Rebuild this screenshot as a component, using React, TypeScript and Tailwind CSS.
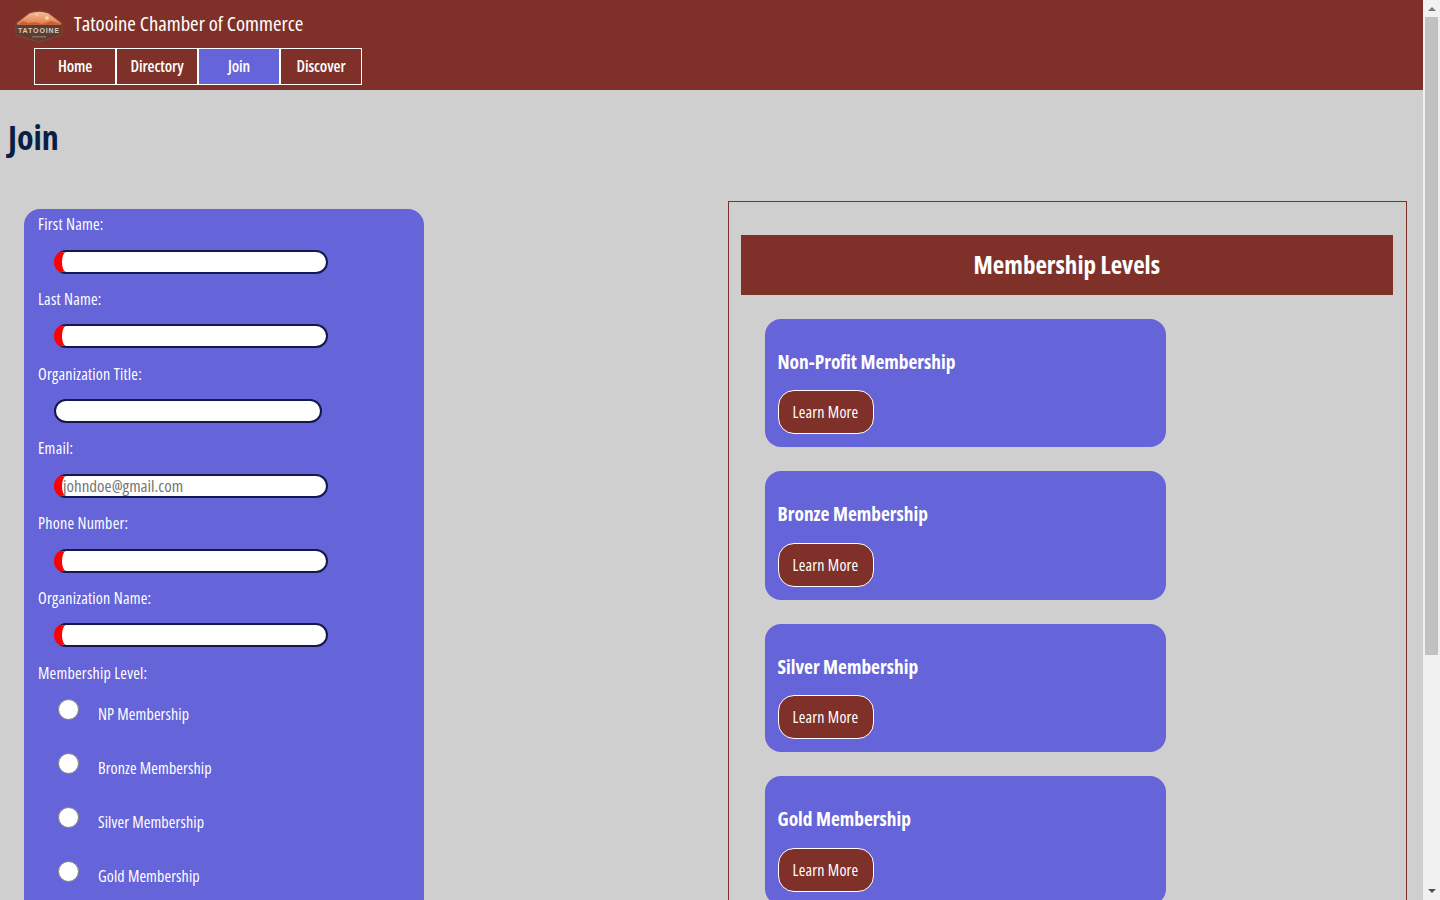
import React from "react";

const fields = [
  { label: "First Name:", required: true },
  { label: "Last Name:", required: true },
  { label: "Organization Title:", required: false },
  { label: "Email:", required: true, placeholder: "johndoe@gmail.com" },
  { label: "Phone Number:", required: true },
  { label: "Organization Name:", required: true },
];

const radios = ["NP Membership", "Bronze Membership", "Silver Membership", "Gold Membership"];
const levels = ["Non-Profit Membership", "Bronze Membership", "Silver Membership", "Gold Membership"];
const nav = ["Home", "Directory", "Join", "Discover"];

const Logo = () => (
  <svg width="48" height="32" viewBox="0 0 48 32" className="shrink-0 self-start mt-[10px]">
    <defs>
      <linearGradient id="sky" x1="0" y1="0" x2="0" y2="1">
        <stop offset="0" stopColor="#f6bd94" />
        <stop offset="1" stopColor="#e0774a" />
      </linearGradient>
    </defs>
    <path d="M1 13 L14 3 Q24 -1 34 3 L47 13 L47 25 L24 32 L1 25 Z" fill="#5f3c32" stroke="#8a5a48" strokeWidth="0.5" />
    <path d="M2 13 L14.5 3.5 Q24 0 33.5 3.5 L46 13 L46 15 L2 15 Z" fill="url(#sky)" />
    <path d="M2 15 L8 11 L13 13 L20 12 L27 14 L36 11 L46 14 L46 15 Z" fill="#c4623c" />
    <circle cx="32" cy="8" r="1.8" fill="#fcdca6" />
    <circle cx="22" cy="5" r="1.3" fill="#f8c890" />
    <text x="24" y="22.5" textAnchor="middle" fontSize="7" fill="#dccbbc" letterSpacing="0.9" fontFamily="'Liberation Sans', sans-serif" fontWeight="700">
      TATOOINE
    </text>
    <rect x="17" y="26" width="14" height="1.5" fill="#8a6a58" />
  </svg>
);

export default function App() {
  return (
    <div className="min-h-[1219px] bg-[#cfcfcf] pr-[17px] font-['Open_Sans',sans-serif] font-stretch-[75%]">
      <header className="h-[90px] bg-[#7f3129] text-white">
        <div className="flex items-center pl-[15px] h-[48px]">
          <Logo />
          <span className="ml-[11px] text-[20.7px] font-medium">Tatooine Chamber of Commerce</span>
        </div>
        <nav className="flex ml-[34px] font-semibold tracking-[-0.1px]">
          {nav.map((item) => (
            <a
              key={item}
              className={
                item === "Join"
                  ? "w-[82px] h-[37px] pb-px flex items-center justify-center border border-white bg-[#6564d8]"
                  : "w-[82px] h-[37px] pb-px flex items-center justify-center border border-white"
              }
            >
              {item}
            </a>
          ))}
        </nav>
      </header>

      <h1 className="pl-2 pt-[22px] h-[111px] text-[34px] font-bold text-[#0b1f44]">Join</h1>

      <main className="grid grid-cols-2">
        <div>
          <form className="ml-6 mt-[8px] w-[400px] h-[980px] rounded-2xl bg-[#6564d8] pl-[14px] pt-[3px] text-white font-medium">
            {fields.map((f) => (
              <div key={f.label} className="h-[74.75px]">
                <label className="block h-6 leading-6 tracking-[0.23px]">{f.label}</label>
                <input
                  placeholder={f.placeholder}
                  className={
                    f.required
                      ? "block mt-[13.6px] ml-4 box-content w-[263px] h-5 pl-px rounded-full border-2 border-l-8 border-[#14184a] border-l-[#ff0000] bg-white text-[17px] font-normal placeholder:text-[#757575]"
                      : "block mt-[13.6px] ml-4 box-content w-[264px] h-5 rounded-full border-2 border-[#14184a] bg-white text-base"
                  }
                />
              </div>
            ))}
            <div className="h-6 leading-6 tracking-[0.23px]">Membership Level:</div>
            <div className="mt-[14.5px]">
              {radios.map((r) => (
                <label key={r} className="flex h-[54px] items-start">
                  <input type="radio" name="level" className="ml-5 mt-0 size-[21px]" />
                  <span className="ml-[19px] mt-[3px] leading-6 tracking-[0.12px]">{r}</span>
                </label>
              ))}
            </div>
          </form>
        </div>

        <section className="ml-4 mr-4 border border-[#7f3129] pl-3 pr-[13px] pt-[33px] self-start">
          <h2 className="h-[60px] bg-[#7f3129] text-white text-[25px] font-bold flex items-center justify-center">
            Membership Levels
          </h2>
          <div className="mt-6 ml-6 flex flex-col gap-6 pb-6">
            {levels.map((l) => (
              <div key={l} className="w-[401px] h-[128.4px] rounded-2xl bg-[#6564d8] pl-[13px] pt-[28px] text-white">
                <h3 className="h-[30px] leading-[30px] text-[19.4px] font-bold">{l}</h3>
                <button className="mt-[13.4px] w-[96px] h-[44px] rounded-2xl border border-white bg-[#7f3129] text-white font-medium tracking-[0.2px]">
                  Learn More
                </button>
              </div>
            ))}
          </div>
        </section>
      </main>

      {/* scrollbar of the page */}
      <div className="fixed top-0 right-0 bottom-0 w-[17px] bg-[#f1f1f1]">
        <div className="absolute left-[4.5px] top-[7px] border-x-4 border-b-4 border-x-transparent border-b-[#7a7a7a]" />
        <div className="absolute left-[2px] right-[2px] top-[17px] h-[638px] bg-[#c1c1c1]" />
        <div className="absolute left-[4.5px] bottom-[7px] border-x-4 border-t-4 border-x-transparent border-t-[#505050]" />
      </div>
    </div>
  );
}
